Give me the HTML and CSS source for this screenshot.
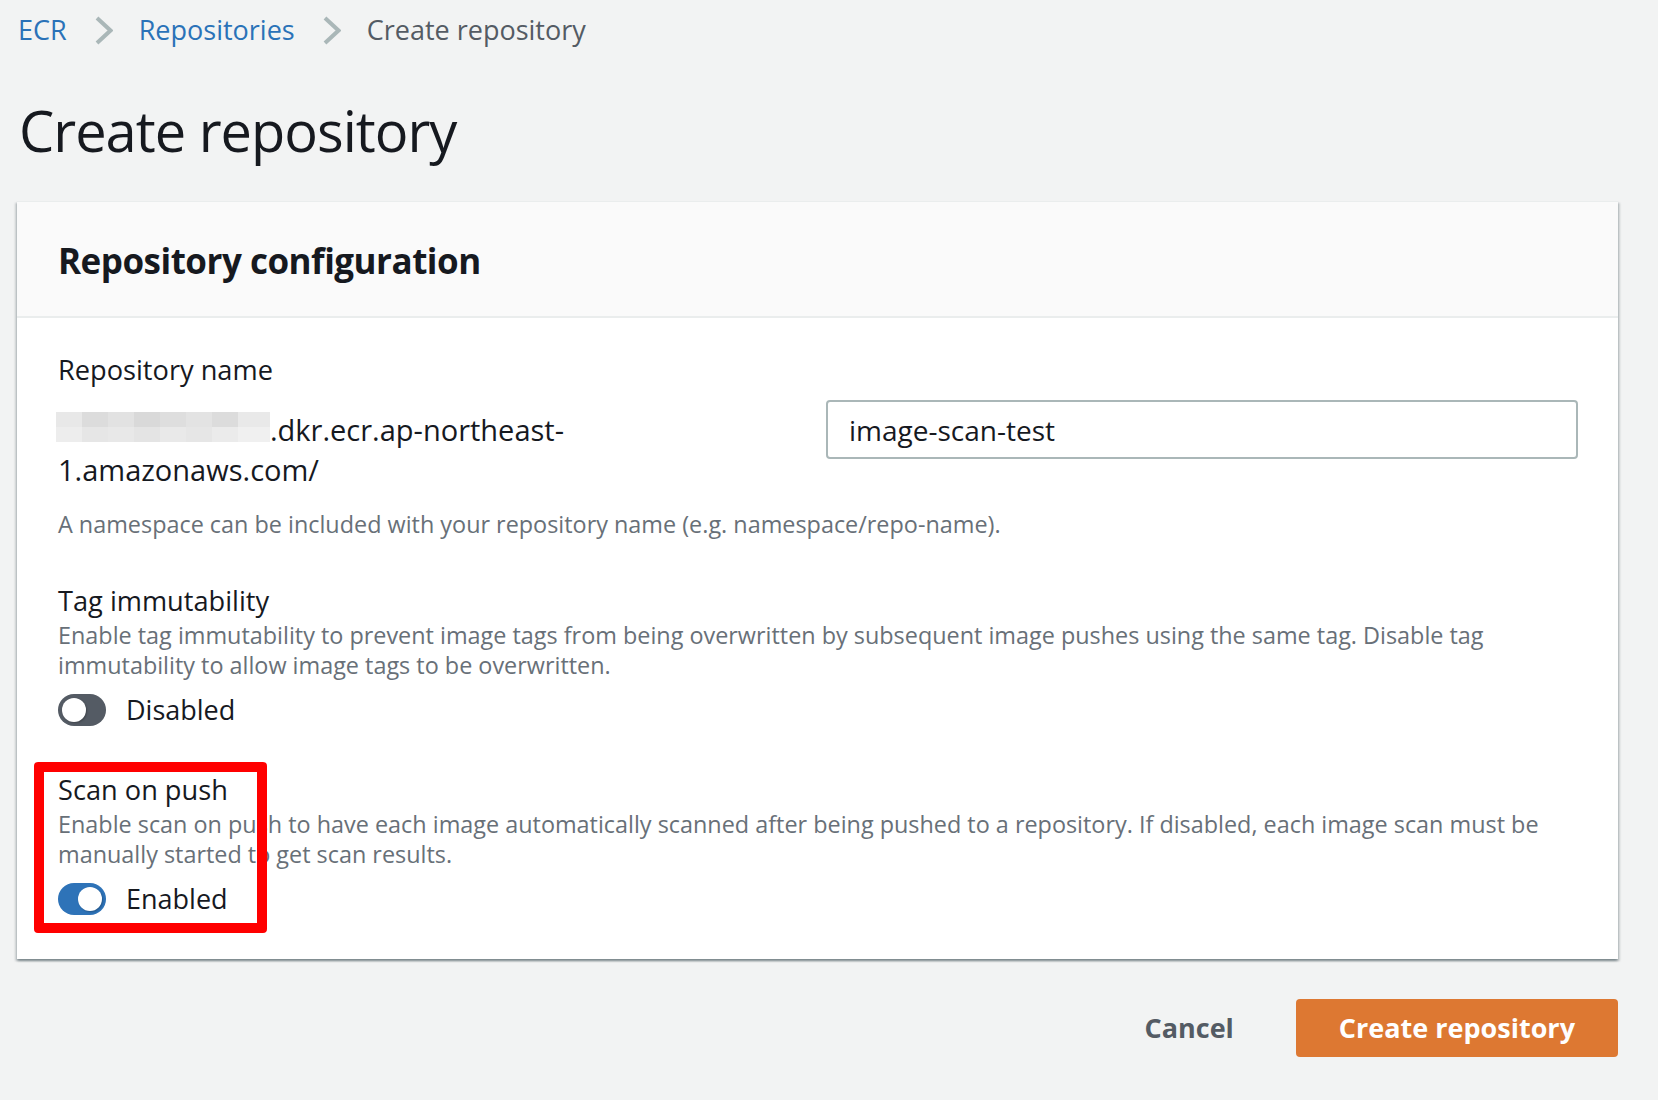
FILE: index.html
```html
<!DOCTYPE html>
<html lang="en">
<head>
<meta charset="utf-8">
<title>Create repository</title>
<link rel="stylesheet" href="styles.css">
</head>
<body>
<div class="page">
  <nav class="crumbs">
    <a class="crumb-link" href="#">ECR</a>
    <svg class="chev" viewBox="0 0 18 29" aria-hidden="true"><polyline points="2,2 15.5,14.5 2,27" fill="none" stroke="#aab7b8" stroke-width="4"/></svg>
    <a class="crumb-link" href="#">Repositories</a>
    <svg class="chev" viewBox="0 0 18 29" aria-hidden="true"><polyline points="2,2 15.5,14.5 2,27" fill="none" stroke="#aab7b8" stroke-width="4"/></svg>
    <span class="crumb-current">Create repository</span>
  </nav>

  <h1 class="title">Create repository</h1>

  <section class="card">
    <div class="card-head">
      <h2 class="card-title">Repository configuration</h2>
    </div>
    <div class="card-body">
      <div class="field">
        <div class="label">Repository name</div>
        <div class="name-row">
          <div class="uri"><span class="mask"></span>.dkr.ecr.ap-northeast-<br>1.amazonaws.com/</div>
          <input class="text-input" type="text" value="image-scan-test">
        </div>
        <div class="hint hint-ns">A namespace can be included with your repository name (e.g. namespace/repo-name).</div>
      </div>

      <div class="field field-tag">
        <div class="label">Tag immutability</div>
        <div class="hint">Enable tag immutability to prevent image tags from being overwritten by subsequent image pushes using the same tag. Disable tag immutability to allow image tags to be overwritten.</div>
        <div class="toggle-row">
          <span class="toggle"><span class="knob"></span></span>
          <span class="toggle-label">Disabled</span>
        </div>
      </div>

      <div class="field field-scan">
        <div class="label">Scan on push</div>
        <div class="hint">Enable scan on push to have each image automatically scanned after being pushed to a repository. If disabled, each image scan must be manually started to get scan results.</div>
        <div class="toggle-row">
          <span class="toggle toggle-on"><span class="knob"></span></span>
          <span class="toggle-label">Enabled</span>
        </div>
        <div class="highlight"></div>
      </div>
    </div>
  </section>

  <div class="actions">
    <button class="btn btn-link" type="button">Cancel</button>
    <button class="btn btn-primary" type="button">Create repository</button>
  </div>
</div>
</body>
</html>
```

FILE: styles.css
```css
body {
  margin: 0;
  background: #f2f3f3;
  font-family: "Open Sans", "Noto Sans", "Liberation Sans", sans-serif;
  color: #16191f;
}

.page {
  padding: 12px 40px 0 17px;
}

.crumbs {
  display: flex;
  align-items: center;
  padding-left: 1px;
  font-size: 27px;
  line-height: 36px;
}

.crumb-link {
  color: #2a72b8;
  text-decoration: none;
}

.chev {
  width: 18px;
  height: 29px;
  margin: 0 26px 0 28px;
  flex: none;
}

.crumb-current {
  color: #545b64;
}

.title {
  margin: 50px 0 0;
  padding-left: 2px;
  font-size: 56px;
  line-height: 64px;
  font-weight: 400;
  letter-spacing: -1px;
}

.card {
  margin-top: 39px;
  background: #fff;
  border-top: 1px solid #eaeded;
  box-shadow: 0 2px 2px rgba(0, 28, 36, 0.3), 2px 2px 2px rgba(0, 28, 36, 0.15), -2px 2px 2px rgba(0, 28, 36, 0.15);
}

.card-head {
  background: #fafafa;
  padding: 37px 40px 33px 41px;
  border-bottom: 2px solid #eaeded;
}

.card-title {
  margin: 0;
  font-size: 35px;
  line-height: 44px;
  font-weight: 700;
  letter-spacing: -0.5px;
}

.card-body {
  padding: 34px 40px 44px 41px;
}

.label {
  font-size: 27.2px;
  line-height: 36px;
}

.name-row {
  display: grid;
  grid-template-columns: 1fr 752px;
  column-gap: 16px;
  align-items: start;
  margin-top: 12px;
}

.uri {
  padding-top: 10px;
  font-size: 29px;
  line-height: 40px;
}

.mask {
  display: inline-block;
  width: 214px;
  height: 30px;
  margin-left: -2px;
  vertical-align: -1px;
  background:
    linear-gradient(to right, #e8e8e8 0 26px, #dcdcdc 26px 52px, #e2e2e2 52px 78px, #d9d9d9 78px 104px, #dedede 104px 130px, #e3e3e3 130px 156px, #dcdcdc 156px 182px, #e9e9e9 182px) top / 100% 50% no-repeat,
    linear-gradient(to right, #ededed 0 26px, #e6e6e6 26px 52px, #e8e8e8 52px 78px, #e4e4e4 78px 104px, #e9e9e9 104px 130px, #e6e6e6 130px 156px, #ebebeb 156px 182px, #f0f0f0 182px) bottom / 100% 50% no-repeat;
}

.text-input {
  box-sizing: border-box;
  width: 100%;
  height: 59px;
  margin: 0;
  border: 2px solid #aab7b8;
  border-radius: 4px;
  padding: 0 21px;
  font-family: "Open Sans", "Noto Sans", "Liberation Sans", sans-serif;
  font-size: 28px;
  color: #16191f;
  background: #fff;
  outline: none;
}

.hint {
  font-size: 23.4px;
  line-height: 30px;
  color: #687078;
  margin-top: 1px;
}

.hint-ns {
  margin-top: 19px;
}

.field-tag {
  margin-top: 44px;
}

.field-scan {
  margin-top: 46px;
  position: relative;
}

.toggle-row {
  display: flex;
  align-items: center;
  height: 32px;
  margin-top: 14px;
}

.toggle {
  box-sizing: border-box;
  display: flex;
  align-items: center;
  width: 48px;
  height: 32px;
  padding: 0 4px;
  border-radius: 16px;
  background: #545b64;
  flex: none;
}

.toggle-on {
  background: #2e73b8;
  justify-content: flex-end;
}

.knob {
  width: 24px;
  height: 24px;
  border-radius: 50%;
  background: #fff;
  box-shadow: 1px 1px 2px rgba(0, 0, 0, 0.25);
}

.toggle-label {
  margin-left: 20px;
  font-size: 27px;
  line-height: 32px;
}

.highlight {
  position: absolute;
  left: -24px;
  top: -10px;
  width: 233px;
  height: 171px;
  box-sizing: border-box;
  border: 10px solid #ff0000;
  border-radius: 4px;
  pointer-events: none;
}

.actions {
  display: flex;
  justify-content: flex-end;
  align-items: center;
  margin-top: 40px;
}

.btn {
  font-family: "Open Sans", "Noto Sans", "Liberation Sans", sans-serif;
  font-size: 27px;
  line-height: 36px;
  font-weight: 700;
  border: none;
  border-radius: 4px;
  padding: 11px 43px;
  cursor: pointer;
}

.btn-link {
  background: transparent;
  color: #545b64;
  margin-right: 19px;
}

.btn-primary {
  background: #dd7832;
  color: #fff;
}
```
